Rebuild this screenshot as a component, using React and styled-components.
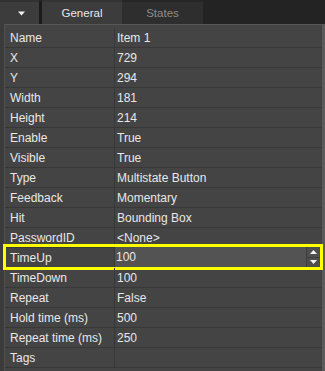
import React from "react";
import styled, { createGlobalStyle } from "styled-components";

const Global = createGlobalStyle`
  html, body { margin: 0; padding: 0; background: #3b3b3b; }
  body { font-family: "Liberation Sans", Arial, sans-serif; }
`;

const Root = styled.div`
  width: 325px;
  height: 371px;
  background: #3b3b3b;
  display: flex;
  flex-direction: column;
  overflow: hidden;
`;

const TabBar = styled.div`
  height: 24px;
  display: flex;
  background: #232323;
  flex-shrink: 0;
`;

const MenuButton = styled.div`
  width: 39px;
  box-sizing: border-box;
  border-top: 2px solid #323232;
  background: #3c3c3c;
  display: flex;
  align-items: center;
  justify-content: center;
  padding-left: 4px;
  padding-top: 1px;
`;

const TabDivider = styled.div`
  width: 3px;
  margin-top: 2px;
  background: #1b1b1b;
`;

const Tab = styled.div`
  width: ${(p) => p.$w}px;
  box-sizing: border-box;
  border-top: 2px solid ${(p) => (p.$active ? "#333333" : "#262626")};
  background: ${(p) => (p.$active ? "#3c3c3c" : "#2e2e2e")};
  color: ${(p) => (p.$active ? "#e8e8e8" : "#8c8c8c")};
  font-size: 11.5px;
  display: flex;
  align-items: center;
  justify-content: center;
  padding-bottom: 1px;
`;

const Body = styled.div`
  flex: 1;
  display: flex;
  padding-left: 4px;
  background: #3b3b3b;
`;

const Panel = styled.div`
  flex: 1;
  box-sizing: border-box;
  border-top: 1px solid #575757;
  border-left: 1px solid #505050;
  background: #444444;
  padding-top: 3px;
  display: flex;
  flex-direction: column;
`;

const ScrollEdge = styled.div`
  width: 3px;
  background: #5a5a5a;
`;

const Row = styled.div`
  position: relative;
  height: 20px;
  box-sizing: border-box;
  border-bottom: 1px solid #383838;
  display: grid;
  grid-template-columns: 110px 1fr;
  font-size: 12px;
  color: #e8e8e8;

  ${(p) =>
    p.$highlight &&
    `
    &::after {
      content: "";
      position: absolute;
      left: -2px;
      right: -1px;
      top: -4px;
      bottom: -3px;
      border: 3px solid #ffff00;
      pointer-events: none;
    }
  `}
`;

const Label = styled.div`
  display: flex;
  align-items: center;
  padding-left: 5px;
  border-right: 1px solid #383838;
  white-space: nowrap;
  overflow: hidden;
`;

const Value = styled.div`
  display: flex;
  align-items: center;
  padding-left: 2px;
  white-space: nowrap;
`;

const Editor = styled.div`
  display: flex;
  align-items: stretch;
  margin-top: -1px;
  margin-right: 2px;
  background: #535353;
`;

const EditorText = styled.div`
  flex: 1;
  display: flex;
  align-items: center;
  padding-left: 1px;
  border-right: 1px solid #3e3e3e;
`;

const Spinner = styled.div`
  width: 13px;
  display: flex;
  flex-direction: column;
  background: #4e4e4e;
`;

const SpinButton = styled.div`
  flex: 1;
  display: flex;
  align-items: center;
  justify-content: center;
  border-top: ${(p) => (p.$down ? "1px solid #3e3e3e" : "none")};
`;

const Caret = () => (
  <svg width="7" height="5" viewBox="0 0 7 5">
    <polygon points="0,0.5 7,0.5 3.5,4.5" fill="#f2f2f2" />
  </svg>
);

const Arrow = ({ down }) => (
  <svg width="7" height="4" viewBox="0 0 7 4">
    <polygon
      points={down ? "0,0 7,0 3.5,4" : "0,4 7,4 3.5,0"}
      fill="#f4f4f4"
    />
  </svg>
);

const rows = [
  ["Name", "Item 1"],
  ["X", "729"],
  ["Y", "294"],
  ["Width", "181"],
  ["Height", "214"],
  ["Enable", "True"],
  ["Visible", "True"],
  ["Type", "Multistate Button"],
  ["Feedback", "Momentary"],
  ["Hit", "Bounding Box"],
  ["PasswordID", "<None>"],
  ["TimeUp", "100", true],
  ["TimeDown", "100"],
  ["Repeat", "False"],
  ["Hold time (ms)", "500"],
  ["Repeat time (ms)", "250"],
  ["Tags", ""],
];

export default function App() {
  return (
    <Root>
      <Global />
      <TabBar>
        <MenuButton>
          <Caret />
        </MenuButton>
        <TabDivider />
        <Tab $active $w={80}>General</Tab>
        <Tab $w={81}>States</Tab>
      </TabBar>
      <Body>
        <Panel>
          {rows.map(([label, value, edit]) => (
            <Row key={label} $highlight={edit}>
              <Label>{label}</Label>
              {edit ? (
                <Editor>
                  <EditorText>{value}</EditorText>
                  <Spinner>
                    <SpinButton>
                      <Arrow />
                    </SpinButton>
                    <SpinButton $down>
                      <Arrow down />
                    </SpinButton>
                  </Spinner>
                </Editor>
              ) : (
                <Value>{value}</Value>
              )}
            </Row>
          ))}
        </Panel>
        <ScrollEdge />
      </Body>
    </Root>
  );
}
